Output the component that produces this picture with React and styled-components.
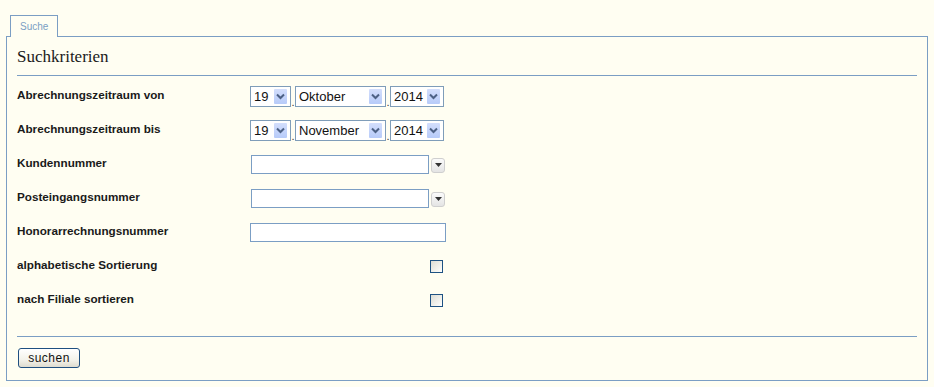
import React from 'react'
import styled, { createGlobalStyle } from 'styled-components'

const GlobalStyle = createGlobalStyle`
    html, body {
        margin: 0;
        padding: 0;
        background: #fffef2;
    }
    body {
        font-family: "Liberation Sans", Arial, sans-serif;
        color: #111;
    }
`

const Page = styled.div`
    padding: 15px 6px 0 6px;
    width: 922px;
`

const TabBar = styled.div`
    display: flex;
    padding-left: 4px;
`

const Tab = styled.div`
    position: relative;
    z-index: 1;
    margin-bottom: -1px;
    height: 22px;
    padding: 0 9px;
    box-sizing: border-box;
    border: 1px solid #7b9ec4;
    border-bottom: none;
    background: #fffef2;
    color: #7b9ec4;
    font-size: 10px;
    line-height: 21px;
`

const Panel = styled.section`
    border: 1px solid #7b9ec4;
    padding: 0 10px 12px 10px;
`

const Heading = styled.h2`
    margin: 10px 0 8px 0;
    font-family: "Liberation Serif", "Times New Roman", serif;
    font-weight: normal;
    font-size: 17px;
    line-height: 20px;
    color: #1a1a1a;
`

const Rule = styled.div`
    height: 1px;
    background: #7b9ec4;
    margin-top: ${p => p.$top || 0}px;
`

const Form = styled.div`
    padding-top: 3px;
    display: flex;
    flex-direction: column;
`

const Row = styled.div`
    display: grid;
    grid-template-columns: 233px 1fr;
    align-items: center;
    height: 34px;
`

const Label = styled.div`
    font-size: 11.7px;
    font-weight: bold;
    color: #1a1a1a;
    padding-bottom: 3px;
`

const DateGroup = styled.div`
    display: flex;
    align-items: flex-end;
`

const Dot = styled.span`
    width: 4px;
    text-align: center;
    font-size: 11px;
    line-height: 10px;
    color: #333;
`

const SelectBox = styled.div`
    display: flex;
    align-items: center;
    justify-content: space-between;
    box-sizing: border-box;
    width: ${p => p.$width}px;
    height: 21px;
    border: 1px solid #7f9db9;
    background: #fff;
    padding: 0 3px 0 3px;
    font-size: 13px;
    color: #111;
`

const ArrowButton = styled.span`
    display: flex;
    align-items: center;
    justify-content: center;
    width: 13px;
    height: 15px;
    background: linear-gradient(180deg, #d3defc 0%, #b7cbf9 100%);
    border-radius: 1px;
`

const ComboWrap = styled.div`
    display: flex;
    align-items: center;
    gap: 2px;
    margin-left: 1px;
`

const TextInput = styled.input`
    box-sizing: border-box;
    width: ${p => p.$width}px;
    height: 19px;
    margin: 0;
    border: 1px solid #7b9ec4;
    background: #fff;
    padding: 0 3px;
    font-family: "Liberation Sans", Arial, sans-serif;
    font-size: 12px;
    outline: none;
`

const DropButton = styled.span`
    display: flex;
    align-items: center;
    justify-content: center;
    box-sizing: border-box;
    width: 14px;
    height: 15px;
    margin-top: 2px;
    border: 1px solid #cfcfcf;
    border-radius: 3px;
    background: linear-gradient(180deg, #fbfbfb 0%, #e4e4e4 100%);
`

const CheckCell = styled.div`
    display: flex;
    justify-content: flex-end;
    width: 196px;
    padding-right: 3px;
    box-sizing: border-box;
`

const CheckBox = styled.span`
    display: block;
    box-sizing: border-box;
    width: 13px;
    height: 13px;
    border: 1px solid #1e5283;
    background: linear-gradient(135deg, #dcdcd4 0%, #f4f4f0 70%, #ffffff 100%);
`

const Footer = styled.div`
    padding-top: 11px;
    padding-left: 1px;
`

const Button = styled.button`
    box-sizing: border-box;
    width: 62px;
    height: 20px;
    padding: 0;
    border: 1px solid #1f4f80;
    border-radius: 3px;
    background: linear-gradient(180deg, #ffffff 0%, #f3f2ea 60%, #dedbcf 100%);
    font-family: "Liberation Sans", Arial, sans-serif;
    font-size: 12px;
    color: #111;
    letter-spacing: 0.5px;
`

const Chevron = () => (
    <svg width="9" height="7" viewBox="0 0 9 7">
        <path d="M1 1.5 L4.5 5 L8 1.5" fill="none" stroke="#4d6185" strokeWidth="2" />
    </svg>
)

const Triangle = () => (
    <svg width="7" height="4" viewBox="0 0 7 4">
        <path d="M0 0 H7 L3.5 4 Z" fill="#333" />
    </svg>
)

const Select = ({ value, width }) => (
    <SelectBox $width={width}>
        <span>{value}</span>
        <ArrowButton><Chevron /></ArrowButton>
    </SelectBox>
)

const DateSelect = ({ day, month, year }) => (
    <DateGroup>
        <Select value={day} width={41} />
        <Dot>.</Dot>
        <Select value={month} width={91} />
        <Dot>.</Dot>
        <Select value={year} width={54} />
    </DateGroup>
)

const Combo = () => (
    <ComboWrap>
        <TextInput $width={178} />
        <DropButton><Triangle /></DropButton>
    </ComboWrap>
)

export default function App() {
    return (
        <Page>
            <GlobalStyle />
            <TabBar>
                <Tab>Suche</Tab>
            </TabBar>
            <Panel>
                <Heading>Suchkriterien</Heading>
                <Rule />
                <Form>
                    <Row>
                        <Label>Abrechnungszeitraum von</Label>
                        <DateSelect day="19" month="Oktober" year="2014" />
                    </Row>
                    <Row>
                        <Label>Abrechnungszeitraum bis</Label>
                        <DateSelect day="19" month="November" year="2014" />
                    </Row>
                    <Row>
                        <Label>Kundennummer</Label>
                        <Combo />
                    </Row>
                    <Row>
                        <Label>Posteingangsnummer</Label>
                        <Combo />
                    </Row>
                    <Row>
                        <Label>Honorarrechnungsnummer</Label>
                        <div><TextInput $width={196} /></div>
                    </Row>
                    <Row>
                        <Label>alphabetische Sortierung</Label>
                        <CheckCell><CheckBox /></CheckCell>
                    </Row>
                    <Row>
                        <Label>nach Filiale sortieren</Label>
                        <CheckCell><CheckBox /></CheckCell>
                    </Row>
                </Form>
                <Rule $top={19} />
                <Footer>
                    <Button>suchen</Button>
                </Footer>
            </Panel>
        </Page>
    )
}
